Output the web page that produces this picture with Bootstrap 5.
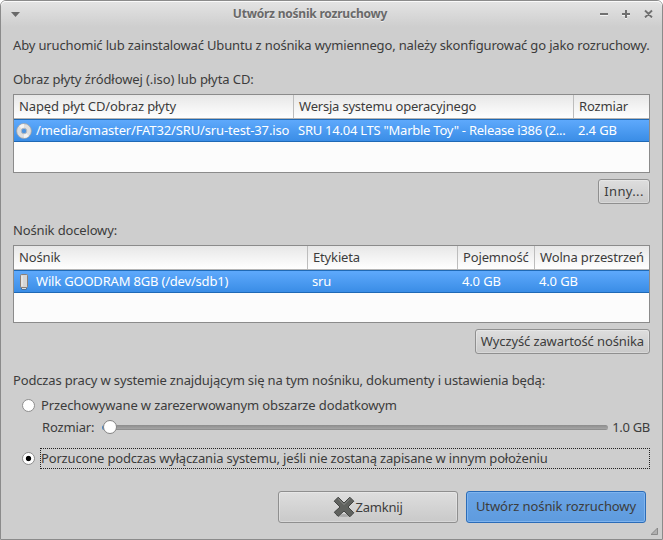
<!DOCTYPE html>
<html lang="pl">
<head>
<meta charset="utf-8">
<meta name="viewport" content="width=device-width, initial-scale=1">
<title>Utwórz nośnik rozruchowy</title>
<link href="https://cdn.jsdelivr.net/npm/bootstrap@5.3.0/dist/css/bootstrap.min.css" rel="stylesheet">
<style>
body{background:#fff;font:13px/18px "Noto Sans","Open Sans",sans-serif;color:#3c3c3c;letter-spacing:-.15px;overflow:hidden;white-space:nowrap}
.window{width:663px;height:540px;background:#cecece;border:1px solid #8b8b8b;border-radius:6px 6px 0 0;box-shadow:inset 0 1px #f8f8f8}
.titlebar{height:26px;padding:0 7px 0 10px;background:linear-gradient(#e4e4e4,#cecece);border-radius:5px 5px 0 0;box-shadow:inset 0 1px #fafafa}
.title-text{font-size:12px;font-weight:700;color:#696969;letter-spacing:-.22px;text-shadow:0 1px #eee}
.content{padding:0 12px}
.intro{height:34px;padding-top:2px}
.caption1{height:33px;padding-top:3px;letter-spacing:-.09px}
.list-box{background:#fcfcfc;border:1px solid #8b8b8b}
.source-list{height:79px}
.target-list{height:78px}
.g{display:grid}
.source-list .g{grid-template-columns:280px 280px 1fr}
.target-list .g{grid-template-columns:294px 150px 77px 1fr}
.heads{height:24px;border-bottom:1px solid #b5b5b5;background:linear-gradient(#e7e7e7,#fff)}
.heads>div{height:23px;line-height:23px;padding-left:5px;border-right:1px solid #bdbdbd}
.heads>div:last-child{border-right:0}
.selected-row{height:23px;line-height:21px;color:#fff;border:solid #1f69b5;border-width:1px 0;background:linear-gradient(#5ea9fc,#3a8de6)}
.selected-row>div{padding-left:4px;min-width:0}
.selected-row>.first{padding-left:2px}
.t-path{letter-spacing:-.145px}.t-sys{letter-spacing:-.25px}.t-head{letter-spacing:-.2px}.t-drive{letter-spacing:-.1px}.t-wilk{letter-spacing:-.19px}
.btn.push{font-size:13px;line-height:21px;padding:1px 5px;color:#3c3c3c;border:1px solid #8f8f8f;border-radius:3px;background:linear-gradient(#dedede,#c9c9c9);box-shadow:inset 0 0 0 1px rgba(255,255,255,.28);height:25px;letter-spacing:-.11px}
.btn.push.other{width:52px;letter-spacing:.35px}
.btn.push.tall{height:32px;width:180px;line-height:30px;padding:0;letter-spacing:-.2px}
.btn.push.go{border-color:#2b6cb8;background:linear-gradient(#6aa4e6,#5e9bde);box-shadow:inset 0 0 0 1px #7fb4ee;line-height:28px;padding-bottom:2px;letter-spacing:-.08px}
.after-list{padding-top:6px}
.caption2{height:32px;margin-top:9px;line-height:34px}
.caption3{height:28px;margin-top:12px;line-height:29px}
.radio-dot{width:13px;height:13px;border-radius:50%;background:#fff;border:1px solid #8e8e8e;flex:none}
.radio-dot.on{background:radial-gradient(circle at center,#000 0 2.2px,#fff 3.1px)}
.opt{padding-left:9px}
.opt1{height:22px}
.opt1 .label-text{padding-left:6px;letter-spacing:-.13px}
.opt-size{height:22px;padding-left:29px}
.track{height:5px;border-radius:3px;background:linear-gradient(90deg,#4a86c4 2px,transparent 2px),linear-gradient(#8c8c8c,#a2a2a2 70%,#858585);width:506px;margin-left:8px}
.knob{width:14px;height:14px;border-radius:50%;background:#fff;border:1px solid #838383;left:1px;top:-5px}
.t-size{letter-spacing:-.3px}
.opt2{margin-top:9px;height:22px}
.focus-line{border:1px dotted #222;height:21px;line-height:19px;margin-left:5px;letter-spacing:-.17px}
.actions{margin-top:22px;gap:8px;padding-right:4px}
.grip{width:7px;height:7px;right:4px;bottom:4px}
</style>
</head>
<body>
<main class="window position-relative">
  <header class="titlebar d-flex align-items-center justify-content-between">
    <svg width="9" height="5" viewBox="0 0 9 5"><path d="M0 0h9L4.500 5z" fill="#696969"/></svg>
    <div class="title-text flex-fill text-center ps-0 pe-0">Utwórz nośnik rozruchowy</div>
    <svg width="55" height="12" viewBox="0 0 55 12" fill="none" stroke="#fff" stroke-opacity=".7" stroke-width="2">
      <path d="M0 7h8M22 7h8M26 3v8M45 3l7 7M52 3l-7 7"/>
      <path stroke="#707070" stroke-opacity="1" d="M0 6h8M22 6h8M26 2v8M45 2.500l7 7M52 2.500l-7 7"/>
    </svg>
  </header>
  <section class="content">
    <div class="intro d-flex align-items-center">Aby uruchomić lub zainstalować Ubuntu z nośnika wymiennego, należy skonfigurować go jako rozruchowy.</div>
    <div class="caption1 d-flex align-items-center">Obraz płyty źródłowej (.iso) lub płyta CD:</div>
    <div class="list-box source-list">
      <div class="g heads"><div class="t-drive">Napęd płyt CD/obraz płyty</div><div class="t-head">Wersja systemu operacyjnego</div><div>Rozmiar</div></div>
      <div class="g selected-row">
        <div class="first d-flex align-items-center">
          <svg class="me-1 flex-shrink-0" width="16" height="16" viewBox="0 0 16 16"><circle cx="8" cy="8" r="7.400" fill="#dfdfdf" stroke="#a2a2a2" stroke-width=".8"/><path d="M8 8L3 3a7 7 0 0 1 5-2zM8 8l5 5a7 7 0 0 1-5 2z" fill="#f3f3f3"/><circle cx="8" cy="8" r="2.800" fill="#4f94df" stroke="#b5bac0"/></svg>
          <span class="t-path">/media/smaster/FAT32/SRU/sru-test-37.iso</span>
        </div>
        <div class="t-sys">SRU 14.04 LTS "Marble Toy" - Release i386 (2...</div>
        <div>2.4 GB</div>
      </div>
    </div>
    <div class="after-list d-flex justify-content-end"><button class="btn push other">Inny...</button></div>

    <div class="caption2">Nośnik docelowy:</div>
    <div class="list-box target-list">
      <div class="g heads"><div>Nośnik</div><div>Etykieta</div><div>Pojemność</div><div>Wolna przestrzeń</div></div>
      <div class="g selected-row">
        <div class="first d-flex align-items-center">
          <svg class="me-1 flex-shrink-0" width="16" height="16" viewBox="0 0 16 16"><path d="M5.500 13h5v2.500h-5z" fill="#555"/><path d="M6 14h4v1H6z" fill="#ddd"/><rect x="4.500" y=".5" width="7" height="13" rx="1" fill="#d6d6d6" stroke="#8b7f77"/><path d="M6 2v10" stroke="#f2f2f2"/></svg>
          <span class="t-wilk">Wilk GOODRAM 8GB (/dev/sdb1)</span>
        </div>
        <div>sru</div><div>4.0 GB</div><div>4.0 GB</div>
      </div>
    </div>
    <div class="after-list d-flex justify-content-end"><button class="btn push">Wyczyść zawartość nośnika</button></div>

    <div class="caption3">Podczas pracy w systemie znajdującym się na tym nośniku, dokumenty i ustawienia będą:</div>
    <div class="opt opt1 d-flex align-items-center"><span class="radio-dot"></span><span class="label-text">Przechowywane w zarezerwowanym obszarze dodatkowym</span></div>
    <div class="opt-size d-flex align-items-center">
      <span>Rozmiar:</span>
      <div class="track position-relative"><span class="knob position-absolute"></span></div>
      <span class="ms-auto t-size">1.0 GB</span>
    </div>
    <div class="opt opt2 d-flex align-items-center"><span class="radio-dot on"></span><div class="focus-line flex-fill">Porzucone podczas wyłączania systemu, jeśli nie zostaną zapisane w innym położeniu</div></div>
    <footer class="actions d-flex justify-content-end">
      <button class="btn push tall d-flex align-items-center justify-content-center">
        <svg width="22" height="22" viewBox="0 0 22 22"><ellipse cx="11" cy="19.500" rx="8" ry="1.500" fill="#aaa"/><path d="M5.200 1.200L11 7l5.800-5.800 4 4L15 11l5.800 5.800-4 4L11 15l-5.800 5.300-4-4L7 11 1.200 5.200z" fill="#60625f" stroke="#424442"/><path d="M5.200 2.800L11 8.500l5.800-5.700" fill="none" stroke="#8a8b89"/></svg>
        <span>Zamknij</span>
      </button>
      <button class="btn push tall go">Utwórz nośnik rozruchowy</button>
    </footer>
  </section>
  <svg class="grip position-absolute" viewBox="0 0 7 7"><path d="M6.500 0v6.500H0z" fill="#b0b0b0" stroke="#7d7d7d" stroke-width=".8"/></svg>
</main>
<script src="https://cdn.jsdelivr.net/npm/bootstrap@5.3.0/dist/js/bootstrap.bundle.min.js"></script>
</body>
</html>
